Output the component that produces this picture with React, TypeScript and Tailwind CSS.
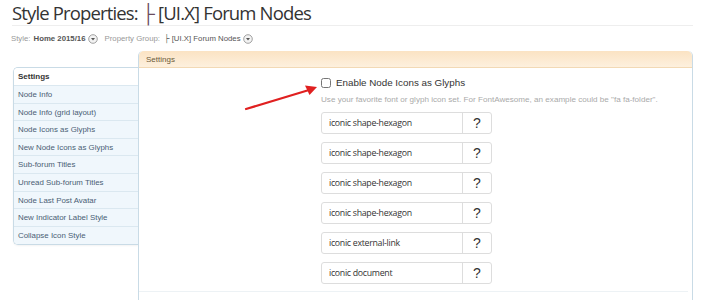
import React from 'react';

const sideItems = [
  'Node Info',
  'Node Info (grid layout)',
  'Node Icons as Glyphs',
  'New Node Icons as Glyphs',
  'Sub-forum Titles',
  'Unread Sub-forum Titles',
  'Node Last Post Avatar',
  'New Indicator Label Style',
  'Collapse Icon Style',
];

const glyphs = [
  'iconic shape-hexagon',
  'iconic shape-hexagon',
  'iconic shape-hexagon',
  'iconic shape-hexagon',
  'iconic external-link',
  'iconic document',
];

function DropCircle() {
  return (
    <svg width="10" height="10" viewBox="0 0 10 10" className="ml-[2px] inline-block align-[-1px]">
      <circle cx="5" cy="5" r="4.3" fill="#f3f3f3" stroke="#8a8a8a" strokeWidth="0.8" />
      <path d="M3 4 L7 4 L5 6.4 Z" fill="#555" />
    </svg>
  );
}

export default function App() {
  return (
    <div className="w-[705px] h-[300px] overflow-hidden bg-white font-['Liberation_Sans',sans-serif]">
      {/* Title */}
      <div className="ml-[12px] mr-[12px] h-[26px] border-b border-[#eeeeee]">
        <h1 className="pt-[1px] text-[18.5px] leading-[24px] text-[#333333] font-['Open_Sans',sans-serif] tracking-[-0.85px]">
          Style Properties: <span className="text-[#6b4c5e]">├</span> [UI.X] Forum Nodes
        </h1>
      </div>

      {/* Breadcrumb */}
      <div className="ml-[11px] mt-[7px] flex items-center text-[7.8px] leading-[11px] text-[#999999]">
        <span>Style:</span>
        <span className="ml-[3px] font-bold text-[#555555]">Home 2015/16</span>
        <DropCircle />
        <span className="ml-[7px]">Property Group:</span>
        <span className="ml-[4px] text-[#555555]">├ [UI.X] Forum Nodes</span>
        <DropCircle />
      </div>

      {/* Body */}
      <div className="ml-[13px] mt-[7px] flex">
        {/* Sidebar */}
        <div className="mt-[16px] w-[125px] self-start">
          <div className="rounded-tl-[5px] rounded-bl-[5px] border border-r-0 border-[#c9dbe6] overflow-hidden shadow-[0_1px_2px_rgba(0,0,0,0.05)]">
            <div className="h-[18px] bg-white px-[4px] text-[8px] leading-[18px] font-bold text-[#333333] border-b border-[#dbe8f0]">
              Settings
            </div>
            {sideItems.map((t, i) => (
              <div
                key={i}
                className={`h-[17.6px] bg-[#f0f7fc] px-[4px] text-[7.9px] leading-[17px] text-[#4a5e74] ${
                  i < sideItems.length - 1 ? 'border-b border-[#dbe8f0]' : ''
                }`}
              >
                {t}
              </div>
            ))}
          </div>
        </div>

        {/* Main panel */}
        <div className="relative w-[555px] h-[260px] border-l border-r border-[#c9dbe6] rounded-t-[5px]">
          <div className="h-[17px] rounded-t-[5px] bg-gradient-to-b from-[#fbe3c3] to-[#fdf0de] border-b border-[#f2d9b5] px-[7px] text-[8px] leading-[17px] text-[#6b5a3a]">
            Settings
          </div>

          <div className="pl-[182px] pt-[8px]">
            <label className="flex items-center h-[14px]">
              <input type="checkbox" className="w-[10px] h-[10px] m-0" />
              <span className="ml-[5px] text-[9.8px] text-[#333333]">Enable Node Icons as Glyphs</span>
            </label>
            <div className="mt-[4px] text-[8.1px] leading-[11px] text-[#aaaaaa]">
              Use your favorite font or glyph icon set. For FontAwesome, an example could be "fa fa-folder".
            </div>

            <div className="mt-[7px] flex flex-col gap-[8px]">
              {glyphs.map((g, i) => (
                <div
                  key={i}
                  className="flex w-[171px] h-[22px] rounded-[3px] border border-[#dddddd] bg-white"
                >
                  <div className="flex-1 px-[7px] text-[8.8px] leading-[20px] text-[#333333] font-['Open_Sans',sans-serif] tracking-[-0.3px]">
                    {g}
                  </div>
                  <div className="w-[29px] border-l border-[#dddddd] text-center text-[14px] leading-[20px] text-[#333333]">
                    ?
                  </div>
                </div>
              ))}
            </div>
          </div>

          <div className="absolute left-0 right-[4px] top-[240px] border-t border-[#edf2f5]" />

          {/* Red arrow overlay */}
          <svg className="absolute left-[100px] top-[30px]" width="90" height="35" viewBox="0 0 90 35">
            <line x1="7" y1="28" x2="70" y2="9" stroke="#e02020" strokeWidth="2.2" strokeLinecap="round" />
            <path d="M78 6 L66 4.5 L70.5 14 Z" fill="#e02020" />
          </svg>
        </div>
      </div>
    </div>
  );
}
